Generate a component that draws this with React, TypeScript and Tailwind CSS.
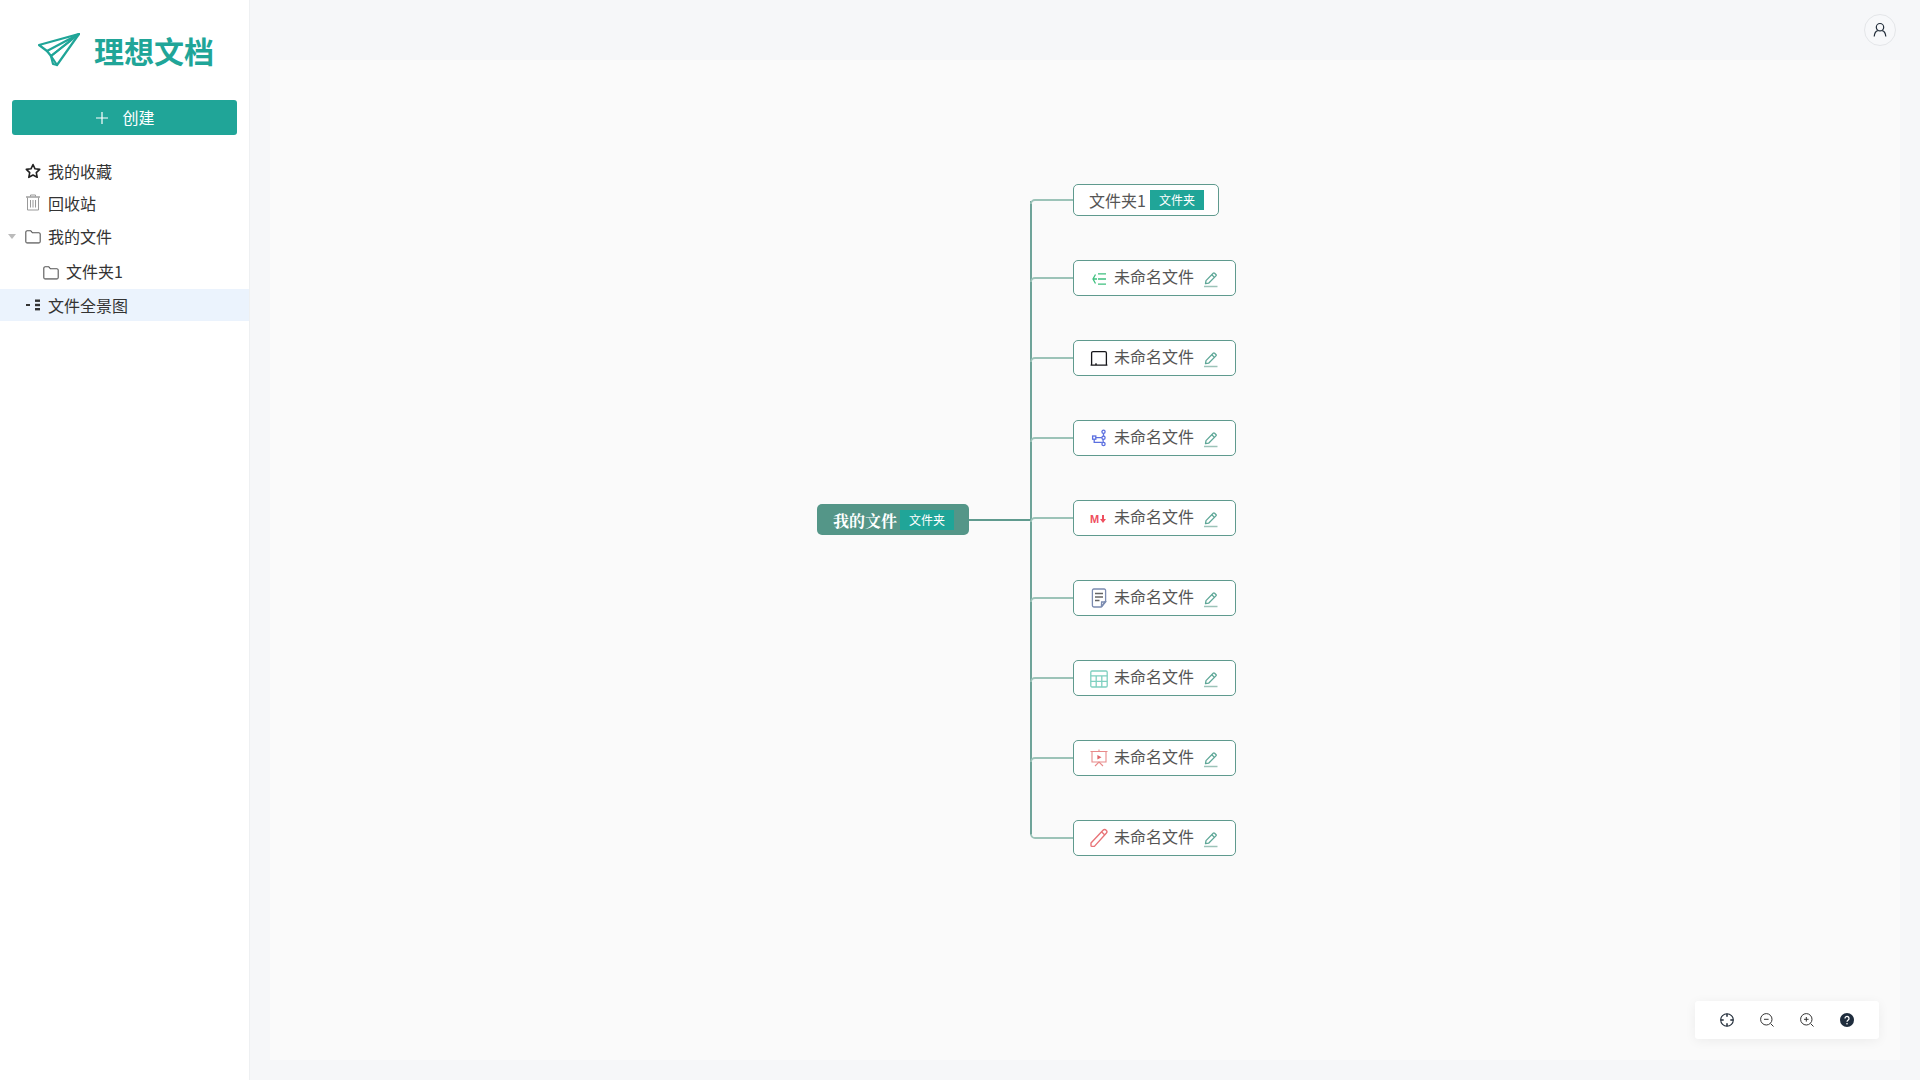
import React from "react";

const NODE_STEP = 80;

function PlaneLogo() {
  return (
    <svg width="42" height="34" viewBox="0 0 42 34" fill="none" stroke="#20a598" strokeWidth="2.2" strokeLinejoin="round" strokeLinecap="round" className="shrink-0">
      <path d="M1 12 41 1 19 32 13 23 9 18Z" />
      <path d="M9 18 41 1 13 23 15 31 19 32" />
      <path d="M13 23 32 8" />
    </svg>
  );
}

function FolderIcon({ className = "" }: { className?: string }) {
  return (
    <svg width="16" height="16" viewBox="0 0 16 16" fill="none" className={className}>
      <path d="M.8 3.2a1.4 1.4 0 0 1 1.4-1.4h3.6l1.6 2h6.4a1.4 1.4 0 0 1 1.4 1.4v7.4a1.4 1.4 0 0 1-1.4 1.4H2.2A1.4 1.4 0 0 1 .8 12.6Z" stroke="#555" strokeWidth="1.1" />
      <path d="M1.5 13.6h13" stroke="#888" strokeWidth="1.2" />
    </svg>
  );
}

function StarIcon() {
  return (
    <svg width="16" height="16" viewBox="0 0 16 16" fill="none" className="-translate-y-px">
      <path d="M8 1.5 10 5.8l4.7.6-3.4 3.2.9 4.7L8 12l-4.2 2.3.9-4.7L1.3 6.4 6 5.8Z" stroke="#222" strokeWidth="1.6" strokeLinejoin="round" />
    </svg>
  );
}

function TrashIcon() {
  return (
    <svg width="16" height="18" viewBox="0 0 16 18" fill="none" stroke="#999" strokeWidth="1" className="-translate-y-px">
      <path d="M5.5 2.5v-1.5h5v1.5" />
      <path d="M1 3h14" strokeWidth="1.4" />
      <path d="M2.5 3.5v12.500h11V3.500" />
      <path d="M5.5 6v7.500M8 6v7.500M10.500 6v7.500" />
    </svg>
  );
}

function MapIcon() {
  return (
    <svg width="16" height="16" viewBox="0 0 16 16" fill="#333">
      <rect x="1" y="7" width="4" height="2" />
      <rect x="10" y="2.500" width="5" height="2.400" />
      <rect x="10" y="6.800" width="5" height="2.400" />
      <rect x="10" y="11" width="5" height="2.400" />
    </svg>
  );
}

function EditIcon() {
  return (
    <svg width="16" height="16" viewBox="0 0 16 16" fill="none" stroke="#5fa898" strokeWidth="1.300" strokeLinejoin="round" className="shrink-0 translate-y-[2px]">
      <path d="M2.500 11.600 3 8.600 10.200 1.200a1 1 0 0 1 1.400 0l1.300 1.300a1 1 0 0 1 0 1.400L5.600 11.200Z" />
      <path d="M8.800 2.700 11.500 5.400" />
      <path d="M1 14.500h13.500" stroke="#9cc3b8" strokeWidth="1.500" />
    </svg>
  );
}

const fileIcons: React.ReactNode[] = [
  <svg key="o" width="18" height="18" viewBox="0 0 18 18" fill="none" stroke="#3fc07f" strokeWidth="1.300" className="translate-x-px translate-y-px">
    <path d="M4.500 4.500 2 9l2.500 4.500M2 9h4M7 3.800h8M7 9h8M7 14.200h8" />
  </svg>,
  <svg key="d" width="18" height="18" viewBox="0 0 18 18" fill="none" stroke="#16161a" strokeWidth="1.300">
    <path d="M1.600 16V4a1.400 1.400 0 0 1 1.400-1.400h12A1.400 1.400 0 0 1 16.400 4v12M.6 16.200h16.800" />
    <path d="M5 15.200h2" />
  </svg>,
  <svg key="m" width="18" height="18" viewBox="0 0 18 18" fill="none" stroke="#5b6fe0" strokeWidth="1.300" className="translate-x-px">
    <circle cx="12.500" cy="2.800" r="1.600" />
    <circle cx="12.500" cy="8.800" r="1.600" />
    <circle cx="12.500" cy="15" r="1.600" />
    <rect x="1.600" y="7" width="3.200" height="3.200" />
    <path d="M12.500 4.400v2.800M12 10.300l.2 3M4.800 8.600h6.100M3.200 10.200v3.200h7.700" />
  </svg>,
  <span key="md" className="flex w-[18px] -translate-x-px translate-y-px items-center justify-center gap-px text-[#ef4f5f]">
    <span className="font-['Liberation_Sans',sans-serif] text-[11px] font-bold leading-none">M</span>
    <svg width="6" height="8" viewBox="0 0 6 8" fill="currentColor"><path d="M2 0h2v4h2L3 8 0 4h2Z" /></svg>
  </span>,
  <svg key="doc" width="18" height="20" viewBox="0 0 18 20" fill="none" stroke="#7b8bb0" strokeWidth="1.300">
    <path d="M15.600 13V2.400A1.400 1.400 0 0 0 14.200 1H3.800A1.400 1.400 0 0 0 2.400 2.400v15.200A1.400 1.400 0 0 0 3.800 19h7.400Z" />
    <path d="M11.400 18.800 11.600 14h4l-4 4.800" />
    <path d="M5 5.500h8M5 9h8M5 12.500h4.500" stroke="#666" />
  </svg>,
  <svg key="t" width="18" height="18" viewBox="0 0 18 18" fill="none" stroke="#7fd0c0" strokeWidth="1.300" className="translate-y-px">
    <rect x=".8" y="1" width="16.400" height="16" rx="1.200" />
    <path d="M.8 5.800h16.400M.8 11.300h16.400M6.200 5.800V17M11.800 5.800V17" />
  </svg>,
  <svg key="p" width="18" height="18" viewBox="0 0 18 18" fill="none" stroke="#e88a8a" strokeWidth="1.100">
    <path d="M.5 2.500h17M9 .5v2M2 2.500v10.500h14V2.500" />
    <path d="M9 13l-4 4M9 13l4 4" />
    <path d="M7.400 6 11.500 8.200 7.400 10.400Z" fill="#e0656a" stroke="none" />
  </svg>,
  <svg key="pen" width="18" height="20" viewBox="0 0 18 20" fill="none" stroke="#e87478" strokeWidth="1.400" strokeLinejoin="round">
    <path d="M1 15 13 2.200a2.200 2.200 0 0 1 3.200 0 2.200 2.200 0 0 1 0 3.100L4.400 18.400H2a1 1 0 0 1-1-1Z" />
    <path d="M11.500 3.800l3.300 3.200" />
  </svg>,
];

function Row({ icon, label, active = false, indent = "pl-[25px]", caret = false, className = "", labelClass = "" }: { icon: React.ReactNode; label: string; active?: boolean; indent?: string; caret?: boolean; className?: string; labelClass?: string }) {
  return (
    <div className={`relative flex h-8 items-center gap-[7px] ${indent} text-base text-[#333] ${active ? "bg-[#ebf3fd]" : ""} ${className}`}>
      {caret && <span className="absolute left-[8px] top-[14px] h-0 w-0 border-x-[4px] border-t-[5px] border-x-transparent border-t-[#bbb]" />}
      {icon}
      <span className={`leading-none ${labelClass}`}>{label}</span>
    </div>
  );
}

export default function App() {
  const tops = Array.from({ length: 8 }, (_, i) => 200 + i * NODE_STEP);
  const branchYs = [140, 218, 298, 378, 458, 538, 618, 698, 778];
  return (
    <div className="flex h-screen w-full overflow-hidden bg-[#f6f7f9] font-['Noto_Sans_CJK_SC','Microsoft_YaHei',sans-serif]">
      <aside className="flex w-[250px] shrink-0 flex-col border-r border-[#eef0f2] bg-white">
        <div className="flex h-[100px] items-center justify-center gap-[14px] pl-[3px]">
          <PlaneLogo />
          <span className="text-[30px] font-bold leading-none text-[#20a598]">理想文档</span>
        </div>
        <div className="px-3">
          <button className="flex h-[35px] w-full items-center justify-center gap-[13px] rounded-[3px] bg-[#20a598] pl-[1px] text-base text-white">
            <svg width="14" height="14" viewBox="0 0 14 14" stroke="#fff" strokeWidth="1.200"><path d="M7 1v12M1 7h12" /></svg>
            <span className="-translate-y-px">创建</span>
          </button>
        </div>
        <nav className="mt-[21px] flex flex-col">
          <Row icon={<StarIcon />} label="我的收藏" labelClass="-translate-y-px" />
          <Row icon={<TrashIcon />} label="回收站" labelClass="-translate-y-px" />
          <Row icon={<FolderIcon className="translate-y-px" />} label="我的文件" caret />
          <Row icon={<FolderIcon className="translate-y-px" />} label="文件夹1" indent="pl-[43px]" className="mt-1" labelClass="-translate-y-px" />
          <Row icon={<MapIcon />} label="文件全景图" active className="mt-px" />
        </nav>
      </aside>
      <main className="relative flex-1 pb-5 pl-5 pr-5 pt-[60px]">
        <div className="absolute right-6 top-[14px] flex h-8 w-8 items-center justify-center rounded-full border border-[#e4e6e9] bg-[#f7f8fa]">
          <svg width="16" height="16" viewBox="0 0 16 16" fill="none" stroke="#222d3a" strokeWidth="1.200"><circle cx="8" cy="5.200" r="3.700" /><path d="M2.200 14.500c.3-3.500 2.300-5.600 3.600-5.900M13.800 14.500c-.3-3.500-2.300-5.600-3.600-5.900" /></svg>
        </div>
        <div className="relative h-full w-full bg-[#fafafa]">
          <svg className="absolute inset-0 h-full w-full" fill="none">
            <path d="M761 141V775" stroke="#5f9a8e" strokeWidth="1.800" />
            <path d="M699 460H761" stroke="#5f9a8e" strokeWidth="2.200" />
            {branchYs.map((y, i) => (
              <path key={y} d={i === branchYs.length - 1 ? `M803 ${y}H765a4 4 0 0 1-4-4` : `M803 ${y}H765a4 4 0 0 0-4 4`} stroke="#9cc3b8" strokeWidth="1.800" />
            ))}
          </svg>

          <div className="absolute left-[547px] top-[444px] flex h-[31px] w-[152px] items-center rounded-[5px] bg-[#549688] pl-4">
            <span className="translate-y-px font-['Noto_Serif_CJK_SC','Noto_Sans_CJK_SC',sans-serif] text-base font-bold leading-none text-white">我的文件</span>
            <span className="ml-[3px] flex h-5 w-[54px] items-center justify-center bg-[#20a598] text-xs leading-none text-white">文件夹</span>
          </div>

          <div className="absolute left-[803px] top-[124px] flex h-8 w-[146px] items-center rounded-[5px] border border-[#5f9a8e] bg-white pl-[15px]">
            <span className="text-base leading-none text-[#555]">文件夹1</span>
            <span className="ml-[4px] flex h-5 w-[54px] items-center justify-center bg-[#20a598] text-xs leading-none text-white">文件夹</span>
          </div>

          {fileIcons.map((icon, i) => (
            <div key={i} style={{ top: tops[i] }} className="absolute left-[803px] flex h-9 w-[163px] items-center rounded-[5px] border border-[#5f9a8e] bg-white pl-4">
              <span className="flex w-[18px] shrink-0 items-center justify-center">{icon}</span>
              <span className="ml-[6px] -translate-y-[2px] text-base leading-none text-[#555]">未命名文件</span>
              <span className="ml-[9px]"><EditIcon /></span>
            </div>
          ))}

          <div className="absolute bottom-[21px] right-[21px] flex h-[38px] w-[184px] items-center justify-center gap-[26px] rounded-[3px] bg-white shadow-[0_2px_12px_rgba(0,0,0,0.06)]">
            <svg width="14" height="14" viewBox="0 0 14 14" fill="none" stroke="#222d3a" strokeWidth="1.100"><circle cx="7" cy="7" r="6.300" /><path d="M7 .7v3M7 10.300v3M.7 7h3M10.300 7h3" strokeWidth="1.500" /></svg>
            <svg width="14" height="14" viewBox="0 0 14 14" fill="none" stroke="#333" strokeWidth="1"><circle cx="6.300" cy="6.300" r="5.700" /><path d="M4 6.300h4.600M10.600 10.600l2.900 2.900" /></svg>
            <svg width="14" height="14" viewBox="0 0 14 14" fill="none" stroke="#333" strokeWidth="1"><circle cx="6.300" cy="6.300" r="5.700" /><path d="M4 6.300h4.600M6.300 4v4.600M10.600 10.600l2.900 2.900" /></svg>
            <svg width="14" height="14" viewBox="0 0 14 14"><circle cx="7" cy="7" r="7" fill="#1f2d3d" /><path d="M5 5.400a2 2 0 1 1 3.200 1.600c-.8.600-1.200.9-1.200 1.800" fill="none" stroke="#fff" strokeWidth="1.300" /><circle cx="7" cy="10.700" r=".8" fill="#fff" /></svg>
          </div>
        </div>
      </main>
    </div>
  );
}
